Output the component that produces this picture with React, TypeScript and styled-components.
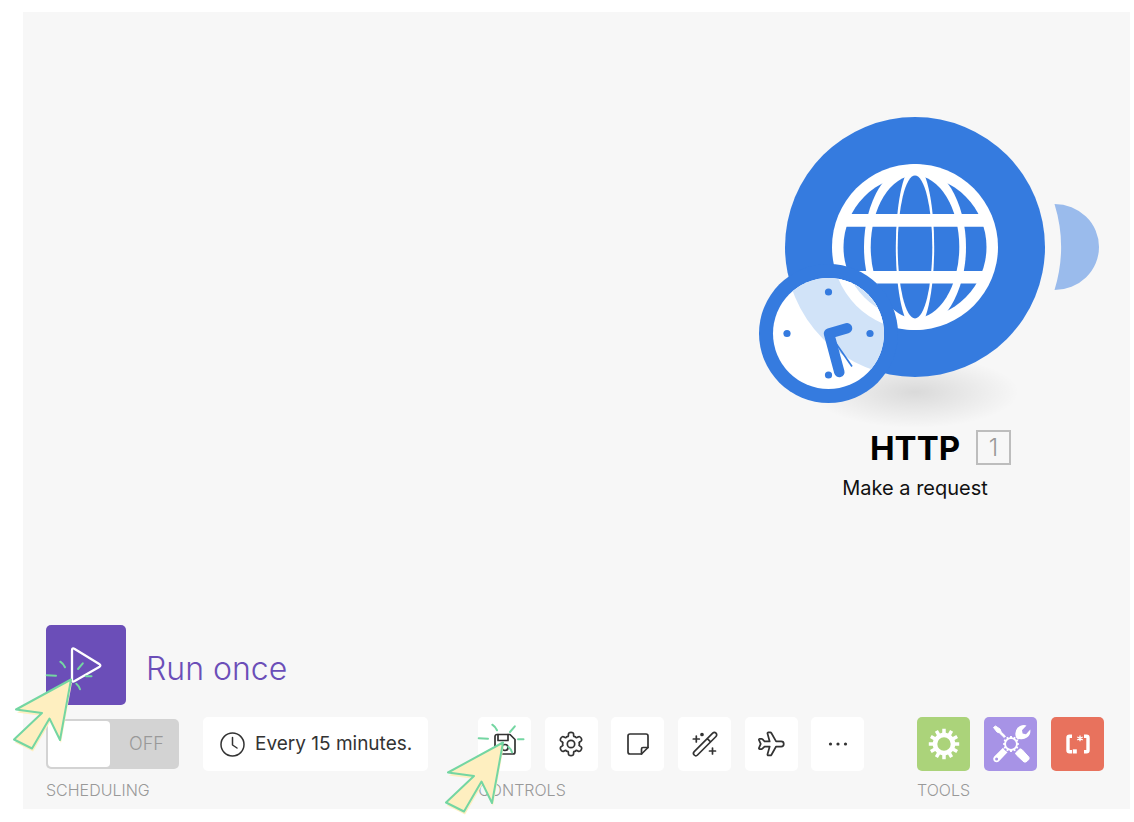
import React from "react";
import styled, { createGlobalStyle } from "styled-components";

const GlobalStyle = createGlobalStyle`
  *, *::before, *::after { box-sizing: border-box; }
  body { margin: 0; background: #fff; font-family: Inter, "Liberation Sans", sans-serif; }
  button { font: inherit; cursor: pointer; }
`;

const BLUE = "#357bdf";
const INK = "#333";

const Page = styled.div`
  display: flex;
  min-height: 100vh;
  padding: 12px 4px 13px 23px;
`;

const Canvas = styled.main`
  flex: 1;
  display: flex;
  flex-direction: column;
  background: #f7f7f7;
`;

const Stage = styled.section`
  flex: 1;
  display: flex;
  justify-content: flex-end;
  align-items: flex-start;
  padding: 105px 85px 40px 40px;
`;

const Module = styled.article`
  display: flex;
  flex-direction: column;
  align-items: center;
  width: 260px;
`;

const ModuleArt = styled.svg`
  display: block;
  width: 260px;
  height: 260px;
  overflow: visible;
`;

const ModuleTitle = styled.h1`
  position: relative;
  margin: 51px 0 8px;
  font-size: 33px;
  line-height: 40px;
  font-weight: 700;
  color: #000;
`;

const ModuleNumber = styled.span`
  position: absolute;
  left: 100%;
  top: 2px;
  width: 35px;
  height: 35px;
  margin-left: 16px;
  border: 2px solid #bdbdbd;
  font-size: 24px;
  line-height: 31px;
  font-weight: 300;
  text-align: center;
  color: #999;
`;

const ModuleAction = styled.p`
  margin: 0;
  font-size: 20px;
  line-height: 24px;
  color: #111;
`;

const Footer = styled.footer`
  display: flex;
  flex-direction: column;
  gap: 12px;
  padding: 0 26px 9px 23px;
`;

const RunRow = styled.div`
  display: flex;
  align-items: center;
  gap: 20px;
`;

const Anchor = styled.div`
  position: relative;
  display: flex;
`;

const RunButton = styled.button`
  display: flex;
  align-items: center;
  justify-content: center;
  width: 80px;
  height: 80px;
  padding: 0;
  border: 0;
  border-radius: 5px;
  background: #6b4eb8;
`;

const RunLabel = styled.span`
  padding-top: 8px;
  font-size: 32px;
  line-height: 40px;
  font-weight: 300;
  color: #6b4eb8;
`;

const Toolbar = styled.div`
  display: flex;
  align-items: flex-end;
`;

const Group = styled.section<{ $width?: number; $push?: boolean }>`
  display: flex;
  flex-direction: column;
  gap: 9px;
  width: ${(p) => (p.$width ? `${p.$width}px` : "auto")};
  margin-left: ${(p) => (p.$push ? "auto" : "0")};
`;

const Items = styled.div<{ $gap?: number }>`
  display: flex;
  align-items: center;
  justify-content: space-between;
  gap: ${(p) => p.$gap ?? 0}px;
`;

const Caption = styled.h2`
  margin: 0;
  font-size: 16px;
  line-height: 20px;
  font-weight: 300;
  color: #999;
`;

const Switch = styled.label`
  position: relative;
  display: flex;
  align-items: center;
  width: 133px;
  height: 50px;
  padding: 2px;
  border-radius: 5px;
  background: #d3d3d3;
  color: #999;
  font-size: 18px;
  line-height: 24px;
  font-weight: 300;
  cursor: pointer;
`;

const SwitchInput = styled.input`
  position: absolute;
  inset: 0;
  width: 100%;
  height: 100%;
  margin: 0;
  opacity: 0;
  cursor: pointer;
`;

const Knob = styled.span`
  width: 62px;
  height: 46px;
  margin-right: 19px;
  border-radius: 4px;
  background: #fff;
`;

const ScheduleButton = styled.button`
  display: flex;
  align-items: center;
  gap: 10px;
  height: 54px;
  padding: 0 16px 0 17px;
  border: 0;
  border-radius: 5px;
  background: #fff;
  color: #333;
  font-size: 19px;
  line-height: 24px;
`;

const Tile = styled.button<{ $color?: string }>`
  display: flex;
  align-items: center;
  justify-content: center;
  width: 53px;
  height: 54px;
  padding: 0;
  border: 0;
  border-radius: 5px;
  background: ${(p) => p.$color ?? "#fff"};
`;

const PointerArt = styled.svg<{ $top: number }>`
  position: absolute;
  left: -36px;
  top: ${(p) => p.$top}px;
  z-index: 1;
  width: 90px;
  height: 100px;
  pointer-events: none;
`;

const Spacer = styled.div`
  width: 50px;
`;

const ARROW = "M61 24.5 6 54.5 32 58 4 84.5 22 93.5 39.5 63.5 50 85Z";

function Pointer({ top }: { top: number }) {
  return (
    <PointerArt $top={top} viewBox="0 0 90 100" fill="none" aria-hidden="true">
      <path d={ARROW} fill="#feefc0" transform="translate(1 3)" />
      <path d={ARROW} fill="#feefc0" stroke="#74d6a2" strokeWidth="2" strokeLinejoin="round" />
      <path
        d="M50.3 6.7q3 2 4.7 5.6M72.8 8.3 68 14M36.7 20.3l9.3.5M76 21.3h5.5M66.3 28.7q2.500 2 3.700 5.600"
        stroke="#74d6a2"
        strokeWidth="2"
        strokeLinecap="round"
      />
    </PointerArt>
  );
}

function Globe({ sea }: { sea: string }) {
  return (
    <g>
      <circle cx="130" cy="130" r="83" fill="#fff" />
      <circle cx="130" cy="130" r="71.5" fill={sea} />
      <ellipse cx="130" cy="130" rx="51" ry="83" fill="#fff" />
      <ellipse cx="130" cy="130" rx="44.300" ry="71.5" fill={sea} />
      <ellipse cx="130" cy="130" rx="19.200" ry="83" fill="#fff" />
      <ellipse cx="130" cy="130" rx="17.300" ry="71.5" fill={sea} />
      <path d="M56 97h148v12.700H56zM56 154h148v12.600H56z" fill="#fff" />
    </g>
  );
}

function HttpArt() {
  return (
    <ModuleArt viewBox="0 0 260 260" role="img" aria-label="HTTP module, scheduled">
      <defs>
        <radialGradient id="shade">
          <stop offset="0" stopColor="#000" stopOpacity="0.12" />
          <stop offset="0.5" stopColor="#000" stopOpacity="0.06" />
          <stop offset="1" stopColor="#000" stopOpacity="0" />
        </radialGradient>
        <clipPath id="dial">
          <circle cx="43.5" cy="216.5" r="55.5" />
        </clipPath>
      </defs>
      <ellipse cx="130" cy="275" rx="104" ry="36" fill="url(#shade)" />
      <path d="M269.500 87A44.500 43 0 0 1 269.500 173A146 146 0 0 0 269.500 87Z" fill="#9abbec" />
      <circle cx="130" cy="130" r="130" fill={BLUE} />
      <Globe sea={BLUE} />
      <circle cx="43.5" cy="216.5" r="69.5" fill={BLUE} />
      <circle cx="43.5" cy="216.5" r="55.5" fill="#fff" />
      <g clipPath="url(#dial)">
        <circle cx="130" cy="130" r="130" fill="#d1e3f8" />
        <Globe sea="#d1e3f8" />
      </g>
      <g fill={BLUE}>
        <circle cx="43.5" cy="175" r="3.600" />
        <circle cx="43.5" cy="258" r="3.600" />
        <circle cx="2" cy="216.5" r="3.600" />
        <circle cx="85" cy="216.5" r="3.600" />
      </g>
      <path d="M62 211.300 44 216.500 54.300 255" fill="none" stroke={BLUE} strokeWidth="10.500" strokeLinecap="round" strokeLinejoin="round" />
      <path d="M50 225 67 249.500" stroke={BLUE} strokeWidth="1.700" />
    </ModuleArt>
  );
}

type Point = [number, number];

const polar = (r: number, deg: number): Point => [
  r * Math.cos((deg * Math.PI) / 180),
  r * Math.sin((deg * Math.PI) / 180),
];

const fmt = ([x, y]: Point) => `${x.toFixed(2)} ${y.toFixed(2)}`;

/* Gear outline with straight-sided teeth, centred on the origin. */
function cog(teeth: number, outer: number, root: number, tip: number, base: number) {
  const step = 360 / teeth;
  const pts: string[] = [];
  for (let i = 0; i < teeth; i++) {
    const a = i * step - 90;
    pts.push(fmt(polar(root, a - base)), fmt(polar(outer, a - tip)), fmt(polar(outer, a + tip)), fmt(polar(root, a + base)));
  }
  return `M${pts.join("L")}Z`;
}

/* Six-lobed outline whose corners are rounded through the edge midpoints. */
function softCog() {
  const pts: Point[] = [];
  for (let i = 0; i < 6; i++) {
    const a = i * 60 - 90;
    pts.push(polar(12, a - 13), polar(12, a + 13), polar(7.7, a + 19), polar(8.8, a + 30), polar(7.7, a + 41));
  }
  const mid = (p: Point, q: Point): Point => [(p[0] + q[0]) / 2, (p[1] + q[1]) / 2];
  let d = `M${fmt(mid(pts[pts.length - 1], pts[0]))}`;
  pts.forEach((p, i) => {
    d += `Q${fmt(p)} ${fmt(mid(p, pts[(i + 1) % pts.length]))}`;
  });
  return `${d}Z`;
}

const Line = styled.svg.attrs({ viewBox: "0 0 28 28", "aria-hidden": true })`
  width: 28px;
  height: 28px;
  overflow: visible;
  fill: none;
  stroke: ${INK};
  stroke-width: 1.7;
  stroke-linecap: round;
  stroke-linejoin: round;
`;

const Solid = styled.svg.attrs({ viewBox: "-20 -20 40 40", "aria-hidden": true })`
  width: 40px;
  height: 40px;
  fill: #fff;
`;

const SaveIcon = () => (
  <Line>
    <path d="M6 4.500h13l5 5v12.500a2 2 0 0 1-2 2H6a2 2 0 0 1-2-2V6.500a2 2 0 0 1 2-2Z" />
    <path d="M7 4.500v6h10V4.500" />
    <circle cx="14" cy="17.500" r="3" />
  </Line>
);

const SettingsIcon = () => (
  <Line>
    <path transform="translate(14 14)" d={softCog()} />
    <circle cx="14" cy="14" r="3.700" />
  </Line>
);

const NoteIcon = () => (
  <Line>
    <path d="M6 4h16a2 2 0 0 1 2 2v11.500l-6.500 6.500H6a2 2 0 0 1-2-2V6a2 2 0 0 1 2-2Z" />
    <path d="M17.500 24v-5a1.500 1.500 0 0 1 1.500-1.500h5" />
  </Line>
);

const WandIcon = () => (
  <Line>
    <path d="M3.200 21.700 21.700 3.200a2.300 2.300 0 0 1 3.300 3.300L6.500 25a2.300 2.300 0 0 1-3.300-3.300ZM16.300 8.600l3.300 3.300" />
    <path d="M5.300 6v6M2.300 9h6M21.500 18v6M18.500 21h6" />
    <circle cx="11" cy="4.500" r="1" fill={INK} />
  </Line>
);

const PlaneIcon = () => (
  <Line>
    <path
      transform="translate(-1.400 -1.400) scale(1.280)"
      strokeWidth="1.350"
      d="M16 10h4a2 2 0 0 1 0 4h-4l-3.600 6.400a1.200 1.200 0 0 1-1 .6H10a.7.7 0 0 1-.7-.9L11 14H7l-1.700 1.700a1 1 0 0 1-.7.3H3.200a.6.6 0 0 1-.6-.8L4 12 2.600 8.800a.6.6 0 0 1 .6-.8h1.400a1 1 0 0 1 .7.3L7 10h4L9.300 3.900A.7.7 0 0 1 10 3h1.400a1.200 1.200 0 0 1 1 .6Z"
    />
  </Line>
);

const MoreIcon = () => (
  <Line>
    <g fill={INK} stroke="none">
      <circle cx="6.500" cy="14" r="1.600" />
      <circle cx="14" cy="14" r="1.600" />
      <circle cx="21.500" cy="14" r="1.600" />
    </g>
  </Line>
);

const GearTool = () => (
  <Solid>
    <path fillRule="evenodd" d={`${cog(12, 15.3, 11.3, 6.5, 9)}M6.700 0A6.700 6.700 0 1 0-6.700 0 6.700 6.700 0 1 0 6.700 0Z`} />
  </Solid>
);

const WrenchTool = () => (
  <Solid>
    <path d="M-17.500-16.500-15.500-18-11-15-9.800-12-5.500-7.800-6.800-6.500-11.500-11-14-12Z" stroke="#fff" strokeLinejoin="round" />
    <path d="M-14.500 18.300a3.400 3.400 0 0 1-2.300-5.800L-8 3.800A8.800 8.800 0 0 0-3.500 8.200L-12 17.300a3.400 3.400 0 0 1-2.500 1ZM-14.400 16.400a1.500 1.500 0 1 0 0-3 1.500 1.500 0 0 0 0 3Z" fillRule="evenodd" />
    <path d="M5-6.500 4.500-8.500Q3.500-15 9-18q3.500-1.800 6.500-.6L11-13.800l.6 3.400 3.400.6 4.300-4.700Q20-9.500 16-6.500q-3.500 2.500-7.500 1.500L7-4.500Z" />
    <path d="M4.500 9 9 4.800l2 .8 7 7.700v2l-3 2.700h-2L5.500 11Z" stroke="#fff" strokeLinejoin="round" />
    <path fillRule="evenodd" d={`${cog(12, 8, 6.8, 6, 9)}M5 0A5 5 0 1 0-5 0 5 5 0 1 0 5 0Z`} />
  </Solid>
);

const PatternTool = () => (
  <Solid>
    <path d="M-6-7.800H-8.500Q-10-7.800-10-6.300V6.300Q-10 7.800-8.500 7.800H-6M6-7.800H8.500Q10-7.800 10-6.300V6.300Q10 7.800 8.500 7.800H6" fill="none" stroke="#fff" strokeWidth="3.400" />
    <path d="M-5.200 5.300h4v4.200h-4Z" />
    <path d="M2-8.500v5.800M-.7-7l5.400 2.800M4.700-7l-5.400 2.800" stroke="#fff" strokeWidth="1.300" />
  </Solid>
);

const controls = [
  { label: "Scenario settings", Icon: SettingsIcon },
  { label: "Notes", Icon: NoteIcon },
  { label: "Auto-align", Icon: WandIcon },
  { label: "Explain flow", Icon: PlaneIcon },
  { label: "More", Icon: MoreIcon },
];

const tools = [
  { label: "Flow control", color: "#abd37a", Icon: GearTool },
  { label: "Tools", color: "#a793e6", Icon: WrenchTool },
  { label: "Text parser", color: "#e8725d", Icon: PatternTool },
];

export default function App() {
  return (
    <>
      <GlobalStyle />
      <Page>
        <Canvas>
          <Stage>
            <Module>
              <HttpArt />
              <ModuleTitle>
                HTTP<ModuleNumber>1</ModuleNumber>
              </ModuleTitle>
              <ModuleAction>Make a request</ModuleAction>
            </Module>
          </Stage>
          <Footer>
            <RunRow>
              <Anchor>
                <RunButton id="run" aria-labelledby="run-label">
                  <svg width="80" height="80" viewBox="0 0 80 80" fill="none" aria-hidden="true">
                    <path
                      d="M26 25.500v29q0 3 2.700 1.600l24.500-14q2.300-1.600 0-3.200l-24.500-15Q26 22.500 26 25.500Z"
                      stroke="#fff"
                      strokeWidth="2.300"
                      strokeLinejoin="round"
                    />
                  </svg>
                </RunButton>
                <Pointer top={30} />
              </Anchor>
              <RunLabel id="run-label">Run once</RunLabel>
            </RunRow>
            <Toolbar>
              <Group>
                <Items $gap={24}>
                  <Switch>
                    <SwitchInput type="checkbox" />
                    <Knob />
                    OFF
                  </Switch>
                  <ScheduleButton>
                    <svg width="25" height="25" viewBox="0 0 25 25" fill="none" stroke={INK} strokeWidth="1.500" strokeLinecap="round" strokeLinejoin="round" aria-hidden="true">
                      <circle cx="12.500" cy="12.500" r="11.500" />
                      <path d="M12.500 5.500v7.500l4.500 3" />
                    </svg>
                    Every 15 minutes.
                  </ScheduleButton>
                </Items>
                <Caption>SCHEDULING</Caption>
              </Group>
              <Spacer />
              <Group $width={386}>
                <Items>
                  <Anchor>
                    <Tile aria-label="Save">
                      <SaveIcon />
                    </Tile>
                    <Pointer top={1} />
                  </Anchor>
                  {controls.map(({ label, Icon }) => (
                    <Tile key={label} aria-label={label}>
                      <Icon />
                    </Tile>
                  ))}
                </Items>
                <Caption>CONTROLS</Caption>
              </Group>
              <Group $width={187} $push>
                <Items>
                  {tools.map(({ label, color, Icon }) => (
                    <Tile key={label} $color={color} aria-label={label}>
                      <Icon />
                    </Tile>
                  ))}
                </Items>
                <Caption>TOOLS</Caption>
              </Group>
            </Toolbar>
          </Footer>
        </Canvas>
      </Page>
    </>
  );
}
